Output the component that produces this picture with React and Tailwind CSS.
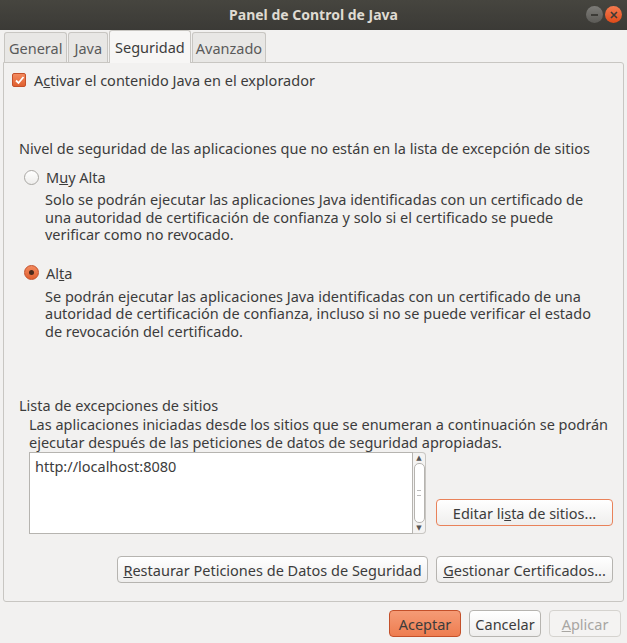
export default function App() {
  const font = { fontFamily: '"Noto Sans", "DejaVu Sans", sans-serif' };
  return (
    <div className="w-[627px] h-[643px] bg-[#f2f1f0] flex flex-col text-[14.5px] leading-[18px] text-[#3c3c3c] overflow-hidden" style={font}>
      {/* TITLE BAR */}
      <div className="h-[30px] shrink-0 bg-gradient-to-b from-[#46453f] to-[#3b3a36] flex items-center relative">
        <div className="flex-1 text-center text-[#dfdbd2] font-bold text-[14px]">Panel de Control de Java</div>
        <div className="absolute right-[5px] top-[6px] flex gap-[2px]">
          <div className="w-[17px] h-[17px] rounded-full bg-gradient-to-b from-[#7d7c78] to-[#5c5b57] flex items-center justify-center">
            <div className="w-[7px] h-[2px] bg-[#3c3b37]" />
          </div>
          <div className="w-[17px] h-[17px] rounded-full bg-gradient-to-b from-[#f47a4e] to-[#df4a16] flex items-center justify-center">
            <svg width="8" height="8" viewBox="0 0 8 8">
              <path d="M1 1 L7 7 M7 1 L1 7" stroke="#3c3b37" strokeWidth="1.6" />
            </svg>
          </div>
        </div>
      </div>

      {/* TABS */}
      <div className="flex items-end px-[4px] h-[32px] shrink-0 gap-[1px]">
        <div className="h-[30px] px-[4px] flex items-center border border-b-0 border-[#c8c6c2] rounded-t-[3px] bg-[#e8e7e5] text-[#5a5a5a]">General</div>
        <div className="h-[30px] px-[5px] flex items-center border border-b-0 border-[#c8c6c2] rounded-t-[3px] bg-[#e8e7e5] text-[#5a5a5a]">Java</div>
        <div className="h-[33px] px-[5px] flex items-center border border-b-0 border-[#c8c6c2] rounded-t-[3px] bg-[#f7f6f5] text-[#3c3c3c] relative top-[1px] z-10">Seguridad</div>
        <div className="h-[30px] px-[3px] flex items-center border border-b-0 border-[#c8c6c2] rounded-t-[3px] bg-[#e8e7e5] text-[#5a5a5a]">Avanzado</div>
      </div>

      {/* PANEL */}
      <div className="mx-[3px] h-[540px] shrink-0 border border-[#c8c6c2] rounded-b-[3px] rounded-tr-[3px] flex flex-col">
        <div className="flex items-center gap-[8px] pl-[8px] pt-[8px]">
          <div className="w-[14px] h-[14px] rounded-[2px] bg-gradient-to-b from-[#f38a5e] to-[#e0602f] border border-[#c4502a] flex items-center justify-center">
            <svg width="11" height="11" viewBox="0 0 11 11">
              <path d="M2 5.5 L4.5 8 L9.5 2" fill="none" stroke="#ffffff" strokeWidth="1.8" />
            </svg>
          </div>
          <span>A<u>c</u>tivar el contenido Java en el explorador</span>
        </div>

        <div className="pl-[15px] pt-[50px]">Nivel de seguridad de las aplicaciones que no están en la lista de excepción de sitios</div>

        <div className="flex items-center gap-[7px] pl-[20px] pt-[11px]">
          <div className="w-[15px] h-[15px] rounded-full border border-[#a9a7a3] bg-gradient-to-b from-white to-[#eeedeb]" />
          <span>M<u>u</u>y Alta</span>
        </div>
        <div className="pl-[41px] pt-[5px] pr-[14px] leading-[17.5px]">
          Solo se podrán ejecutar las aplicaciones Java identificadas con un certificado de una autoridad de certificación de confianza y solo si el certificado se puede verificar como no revocado.
        </div>

        <div className="flex items-center gap-[7px] pl-[20px] pt-[20px]">
          <div className="w-[15px] h-[15px] rounded-full border border-[#c4502a] bg-gradient-to-b from-[#f38a5e] to-[#e0602f] flex items-center justify-center">
            <div className="w-[5px] h-[5px] rounded-full bg-[#4a2a1c]" />
          </div>
          <span>Al<u>t</u>a</span>
        </div>
        <div className="pl-[41px] pt-[6px] pr-[14px] leading-[17.5px]">
          Se podrán ejecutar las aplicaciones Java identificadas con un certificado de una autoridad de certificación de confianza, incluso si no se puede verificar el estado de revocación del certificado.
        </div>

        <div className="pl-[15px] pt-[56px]">Lista de excepciones de sitios</div>
        <div className="pl-[25px] pr-[4px] pt-[2px] leading-[17.5px]">
          Las aplicaciones iniciadas desde los sitios que se enumeran a continuación se podrán ejecutar después de las peticiones de datos de seguridad apropiadas.
        </div>

        <div className="flex items-end pl-[25px] pt-[1px]">
          <div className="w-[384px] h-[82px] bg-white border border-[#b6b4b0] px-[5px] pt-[4px]">http://localhost:8080</div>
          <div className="w-[13px] h-[82px] flex flex-col items-center border border-l-0 border-[#c8c6c2] rounded-r-[4px] bg-[#f4f3f2]">
            <div className="text-[7px] leading-[10px] text-[#555]">▲</div>
            <div className="flex-1 w-[11px] rounded-[5px] border border-[#b6b4b0] bg-white flex items-center justify-center">
              <div className="w-[4px] h-[6px] border-y border-[#bbb]" />
            </div>
            <div className="text-[7px] leading-[10px] text-[#555]">▼</div>
          </div>
          <div className="flex-1 flex justify-end pr-[10px] pb-[8px]">
            <button className="w-[177px] h-[27px] rounded-[4px] border border-[#e9825a] bg-gradient-to-b from-white to-[#efeeed] text-[#3c3c3c]">
              Editar li<u>s</u>ta de sitios...
            </button>
          </div>
        </div>

        <div className="flex justify-end gap-[8px] pr-[10px] pt-[22px]">
          <button className="w-[311px] h-[27px] rounded-[4px] border border-[#b6b4b0] bg-gradient-to-b from-white to-[#efeeed]">
            <u>R</u>estaurar Peticiones de Datos de Seguridad
          </button>
          <button className="w-[177px] h-[27px] rounded-[4px] border border-[#b6b4b0] bg-gradient-to-b from-white to-[#efeeed]">
            <u>G</u>estionar Certificados...
          </button>
        </div>
      </div>

      {/* DIALOG BUTTONS */}
      <div className="flex justify-end gap-[8px] pr-[6px] pt-[8px]">
        <button className="w-[72px] h-[27px] rounded-[4px] border border-[#c4502a] bg-gradient-to-b from-[#f59b76] to-[#ee7d50] text-[#3c3c3c]">Aceptar</button>
        <button className="w-[72px] h-[27px] rounded-[4px] border border-[#b6b4b0] bg-gradient-to-b from-white to-[#efeeed]">Cancelar</button>
        <button className="w-[72px] h-[27px] rounded-[4px] border border-[#d5d3cf] bg-[#f4f3f2] text-[#a8a6a2]"><u>A</u>plicar</button>
      </div>
    </div>
  );
}
